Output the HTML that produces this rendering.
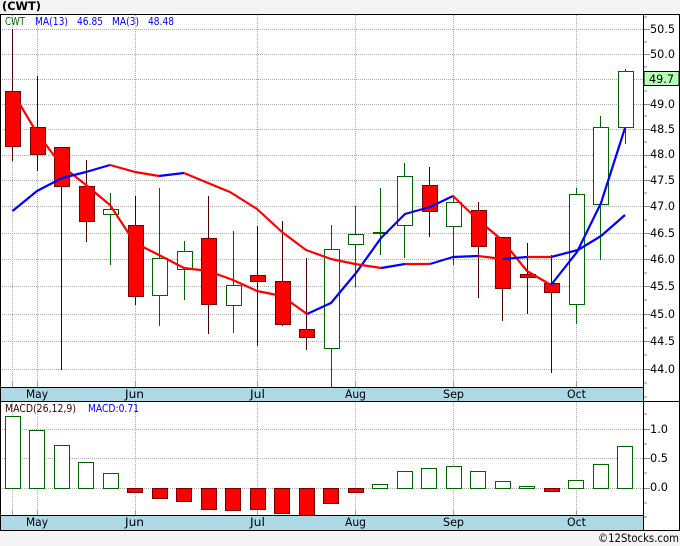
<!DOCTYPE html>
<html><head><meta charset="utf-8"><style>
html,body{margin:0;padding:0;background:#f4f4f4;width:680px;height:546px;overflow:hidden}
svg{display:block}
text{font-family:"DejaVu Sans",sans-serif}
</style></head><body>
<svg width="680" height="546" viewBox="0 0 680 546" xmlns="http://www.w3.org/2000/svg">
<rect width="680" height="546" fill="#f4f4f4"/>
<rect x="0" y="14" width="680" height="517" fill="#fff"/>
<g stroke="#aaa" stroke-width="1" stroke-dasharray="1 1" shape-rendering="crispEdges" fill="none">
<path d="M2 29.5H649M2 54.5H649M2 79.5H649M2 104.5H649M2 129.5H649M2 155.5H649M2 180.5H649M2 206.5H649M2 233.5H649M2 259.5H649M2 286.5H649M2 314.5H649M2 341.5H649M2 369.5H649M2 429.5H649M2 458.5H649M2 488.5H649"/>
<path d="M12.5 15V387M37.5 15V387M135.5 15V387M257.5 15V387M355.5 15V387M453.5 15V387M576.5 15V387M12.5 402V516M37.5 402V516M135.5 402V516M257.5 402V516M355.5 402V516M453.5 402V516M576.5 402V516"/>
</g>
<g stroke="#a0a0a0" stroke-width="1" shape-rendering="crispEdges">
<path d="M12.5 381V387M37.5 381V387M135.5 381V387M257.5 381V387M355.5 381V387M453.5 381V387M576.5 381V387M12.5 510V516M37.5 510V516M135.5 510V516M257.5 510V516M355.5 510V516M453.5 510V516M576.5 510V516"/>
</g>
<g shape-rendering="crispEdges">
<path stroke="#4d0000" fill="none" d="M12.5 29V161M37.5 76V171M61.5 147V370M86.5 160V242M135.5 196V305M208.5 196V334M257.5 226V346M282.5 221V326M306.5 258V350M429.5 167V237M478.5 202V298M502.5 237V321M527.5 243V314M551.5 255V373"/>
<path stroke="#006400" fill="none" d="M110.5 193V265M159.5 188V326M184.5 241V300M233.5 231V333M331.5 225V387M355.5 206V287M380.5 188V255M404.5 163V258M453.5 195V265M576.5 188V324M600.5 116V260M625.5 69V144"/>
<g fill="#f00" stroke="#7a0000">
<rect x="5.5" y="91.5" width="15" height="55"/>
<rect x="30.5" y="127.5" width="15" height="27"/>
<rect x="54.5" y="147.5" width="15" height="39"/>
<rect x="79.5" y="186.5" width="15" height="35"/>
<rect x="128.5" y="225.5" width="15" height="71"/>
<rect x="201.5" y="238.5" width="15" height="66"/>
<rect x="250.5" y="275.5" width="15" height="6"/>
<rect x="275.5" y="281.5" width="15" height="43"/>
<rect x="299.5" y="329.5" width="15" height="8"/>
<rect x="422.5" y="185.5" width="15" height="26"/>
<rect x="471.5" y="210.5" width="15" height="36"/>
<rect x="495.5" y="237.5" width="15" height="51"/>
<rect x="520.5" y="274.5" width="15" height="3"/>
<rect x="544.5" y="283.5" width="15" height="9"/>
</g>
<g fill="#fff" stroke="#006400">
<rect x="103.5" y="209.5" width="15" height="5"/>
<rect x="152.5" y="258.5" width="15" height="37"/>
<rect x="177.5" y="251.5" width="15" height="18"/>
<rect x="226.5" y="285.5" width="15" height="20"/>
<rect x="324.5" y="249.5" width="15" height="99"/>
<rect x="348.5" y="234.5" width="15" height="10"/>
<rect x="397.5" y="176.5" width="15" height="49"/>
<rect x="446.5" y="202.5" width="15" height="24"/>
<rect x="569.5" y="194.5" width="15" height="110"/>
<rect x="593.5" y="127.5" width="15" height="77"/>
<rect x="618.5" y="71.5" width="15" height="56"/>
</g>
<rect x="373" y="232" width="15" height="2" fill="#006400"/>
<g fill="#fff" stroke="#006400">
<rect x="5.5" y="416.5" width="15" height="72"/>
<rect x="29.5" y="430.5" width="15" height="58"/>
<rect x="54.5" y="445.5" width="15" height="43"/>
<rect x="78.5" y="462.5" width="15" height="26"/>
<rect x="103.5" y="473.5" width="15" height="15"/>
<rect x="372.5" y="484.5" width="15" height="4"/>
<rect x="397.5" y="471.5" width="15" height="17"/>
<rect x="421.5" y="468.5" width="15" height="20"/>
<rect x="446.5" y="466.5" width="15" height="22"/>
<rect x="470.5" y="471.5" width="15" height="17"/>
<rect x="495.5" y="481.5" width="15" height="7"/>
<rect x="519.5" y="486.5" width="15" height="2"/>
<rect x="568.5" y="480.5" width="15" height="8"/>
<rect x="593.5" y="464.5" width="15" height="24"/>
<rect x="617.5" y="446.5" width="15" height="42"/>
</g>
<g fill="#f00" stroke="#7a0000">
<rect x="127.5" y="488.5" width="15" height="4"/>
<rect x="152.5" y="488.5" width="15" height="10"/>
<rect x="176.5" y="488.5" width="15" height="13"/>
<rect x="201.5" y="488.5" width="15" height="21"/>
<rect x="225.5" y="488.5" width="15" height="22"/>
<rect x="250.5" y="488.5" width="15" height="21"/>
<rect x="274.5" y="488.5" width="15" height="25"/>
<rect x="299.5" y="488.5" width="15" height="27"/>
<rect x="323.5" y="488.5" width="15" height="15"/>
<rect x="348.5" y="488.5" width="15" height="4"/>
<rect x="544.5" y="488.5" width="15" height="3"/>
</g>
</g>
<g fill="none" stroke-width="2.2" stroke-linejoin="round">
<polyline stroke="#f00" points="12.5,92 37,133 62,166 86,185 110,205 135,243 159,255 184,268 208,271 233,280 257,291 282,296 307,314"/>
<polyline stroke="#00f" points="307,314 331,303 356,273 381,238 405,214 430,207 453,196"/>
<polyline stroke="#f00" points="453,196 478,220 502,240 527,271 551,285"/>
<polyline stroke="#00f" points="551,285 577,252 601,203 625,128"/>
<polyline stroke="#00f" points="12.5,211 37,191 62,178 86,172 110,165"/>
<polyline stroke="#f00" points="110,165 135,172 159,176"/>
<polyline stroke="#00f" points="159,176 184,173"/>
<polyline stroke="#f00" points="184,173 208,183 230,192 257,209 282,232 306,250 331,259 355,264 381,268"/>
<polyline stroke="#00f" points="381,268 405,264"/>
<polyline stroke="#f00" points="405,264 430,264"/>
<polyline stroke="#00f" points="430,264 453,257 478,256"/>
<polyline stroke="#f00" points="478,256 503,259"/>
<polyline stroke="#00f" points="503,259 527,257"/>
<polyline stroke="#f00" points="527,257 551,257"/>
<polyline stroke="#00f" points="551,257 578,250 601,236 625,215"/>
</g>
<g shape-rendering="crispEdges">
<rect x="1" y="388" width="642" height="13" fill="#add8e6"/>
<rect x="1" y="516" width="642" height="14" fill="#add8e6"/>
<g fill="#000">
<rect x="0" y="14" width="680" height="1"/>
<rect x="0" y="14" width="1" height="517"/>
<rect x="643" y="14" width="1" height="517"/>
<rect x="679" y="14" width="1" height="517"/>
<rect x="0" y="387" width="644" height="1"/>
<rect x="0" y="401" width="680" height="1"/>
<rect x="0" y="515" width="644" height="1"/>
<rect x="0" y="530" width="680" height="1"/>
</g>
<path stroke="#888" fill="none" d="M644 17H647M644 29.5H650M644 42H647M644 54.5H650M644 67H647M644 91H647M644 104.5H650M644 116H647M644 129.5H650M644 142H647M644 155.5H650M644 167H647M644 180.5H650M644 193H647M644 206.5H650M644 220H647M644 233.5H650M644 246H647M644 259.5H650M644 273H647M644 286.5H650M644 300H647M644 314.5H650M644 328H647M644 341.5H650M644 355H647M644 369.5H650M644 383H647M644 397H647M644 414H647M644 429.5H650M644 444H647M644 458.5H650M644 473H647M644 488.5H650M644 503H647M644 517H647"/>
<rect x="644" y="71.5" width="35" height="14" fill="#b4ffb4" stroke="#000"/>
</g>
<g font-size="11.5" fill="#000" text-anchor="start">
<text x="650" y="33" textLength="25" lengthAdjust="spacingAndGlyphs">50.5</text>
<text x="650" y="58" textLength="25" lengthAdjust="spacingAndGlyphs">50.0</text>
<text x="649" y="83" textLength="25" lengthAdjust="spacingAndGlyphs">49.7</text>
<text x="650" y="108" textLength="25" lengthAdjust="spacingAndGlyphs">49.0</text>
<text x="650" y="133" textLength="25" lengthAdjust="spacingAndGlyphs">48.5</text>
<text x="650" y="158" textLength="25" lengthAdjust="spacingAndGlyphs">48.0</text>
<text x="650" y="184" textLength="25" lengthAdjust="spacingAndGlyphs">47.5</text>
<text x="650" y="210" textLength="25" lengthAdjust="spacingAndGlyphs">47.0</text>
<text x="650" y="237" textLength="25" lengthAdjust="spacingAndGlyphs">46.5</text>
<text x="650" y="263" textLength="25" lengthAdjust="spacingAndGlyphs">46.0</text>
<text x="650" y="290" textLength="25" lengthAdjust="spacingAndGlyphs">45.5</text>
<text x="650" y="318" textLength="25" lengthAdjust="spacingAndGlyphs">45.0</text>
<text x="650" y="345" textLength="25" lengthAdjust="spacingAndGlyphs">44.5</text>
<text x="650" y="373" textLength="25" lengthAdjust="spacingAndGlyphs">44.0</text>
<text x="650" y="433" textLength="18" lengthAdjust="spacingAndGlyphs">1.0</text>
<text x="650" y="462" textLength="18" lengthAdjust="spacingAndGlyphs">0.5</text>
<text x="650" y="491" textLength="18" lengthAdjust="spacingAndGlyphs">0.0</text>
<text x="26" y="398" textLength="22" lengthAdjust="spacingAndGlyphs">May</text>
<text x="125" y="398" textLength="19" lengthAdjust="spacingAndGlyphs">Jun</text>
<text x="250" y="398" textLength="15" lengthAdjust="spacingAndGlyphs">Jul</text>
<text x="345" y="398" textLength="21" lengthAdjust="spacingAndGlyphs">Aug</text>
<text x="443" y="398" textLength="21" lengthAdjust="spacingAndGlyphs">Sep</text>
<text x="567" y="398" textLength="19" lengthAdjust="spacingAndGlyphs">Oct</text>
<text x="26" y="526" textLength="22" lengthAdjust="spacingAndGlyphs">May</text>
<text x="125" y="526" textLength="19" lengthAdjust="spacingAndGlyphs">Jun</text>
<text x="250" y="526" textLength="15" lengthAdjust="spacingAndGlyphs">Jul</text>
<text x="345" y="526" textLength="21" lengthAdjust="spacingAndGlyphs">Aug</text>
<text x="443" y="526" textLength="21" lengthAdjust="spacingAndGlyphs">Sep</text>
<text x="567" y="526" textLength="19" lengthAdjust="spacingAndGlyphs">Oct</text>
<text x="598" y="542" textLength="81" lengthAdjust="spacingAndGlyphs">©12Stocks.com</text>
</g>
<text x="2" y="10" font-size="11.5" font-weight="bold" fill="#000" textLength="39" lengthAdjust="spacingAndGlyphs">(CWT)</text>
<g font-size="10.5">
<text x="5" y="25" fill="#006400" textLength="20" lengthAdjust="spacingAndGlyphs">CWT</text>
<text x="35" y="25" fill="#00f" textLength="33" lengthAdjust="spacingAndGlyphs">MA(13)</text>
<text x="77" y="25" fill="#00f" textLength="26" lengthAdjust="spacingAndGlyphs">46.85</text>
<text x="112" y="25" fill="#00f" textLength="27" lengthAdjust="spacingAndGlyphs">MA(3)</text>
<text x="148" y="25" fill="#00f" textLength="26" lengthAdjust="spacingAndGlyphs">48.48</text>
<text x="5" y="412" fill="#400000" textLength="71" lengthAdjust="spacingAndGlyphs">MACD(26,12,9)</text>
<text x="88" y="412" fill="#00f" textLength="51" lengthAdjust="spacingAndGlyphs">MACD:0.71</text>
</g>
</svg>
</body></html>
